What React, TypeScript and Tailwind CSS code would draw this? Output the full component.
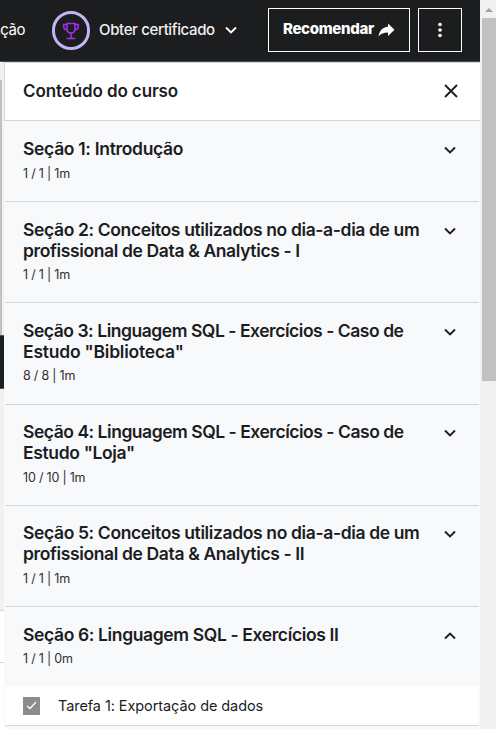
import React from "react";

type Line = { text: string; tracking: string };
type Section = { lines: Line[]; meta: string; metaClass: string; height: string; open?: boolean };

const sections: Section[] = [
  {
    lines: [{ text: "Seção 1: Introdução", tracking: "tracking-[-0.32px]" }],
    meta: "1 / 1 | 1m", metaClass: "mt-[6px]", height: "h-[81px] pt-[17px]",
  },
  {
    lines: [
      { text: "Seção 2: Conceitos utilizados no dia-a-dia de um", tracking: "tracking-[-0.37px]" },
      { text: "profissional de Data & Analytics - I", tracking: "tracking-[-0.37px]" },
    ],
    meta: "1 / 1 | 1m", metaClass: "mt-[4px]", height: "h-[101px] pt-[17px]",
  },
  {
    lines: [
      { text: "Seção 3: Linguagem SQL - Exercícios - Caso de", tracking: "tracking-[-0.46px]" },
      { text: 'Estudo "Biblioteca"', tracking: "tracking-[-0.22px]" },
    ],
    meta: "8 / 8 | 1m", metaClass: "mt-[4px]", height: "h-[102px] pt-[17px]",
  },
  {
    lines: [
      { text: "Seção 4: Linguagem SQL - Exercícios - Caso de", tracking: "tracking-[-0.47px]" },
      { text: 'Estudo "Loja"', tracking: "tracking-[-0.35px]" },
    ],
    meta: "10 / 10 | 1m", metaClass: "mt-[5px]", height: "h-[101px] pt-[16px]",
  },
  {
    lines: [
      { text: "Seção 5: Conceitos utilizados no dia-a-dia de um", tracking: "tracking-[-0.37px]" },
      { text: "profissional de Data & Analytics - II", tracking: "tracking-[-0.37px]" },
    ],
    meta: "1 / 1 | 1m", metaClass: "mt-[5px]", height: "h-[101px] pt-[16px]",
  },
  {
    lines: [{ text: "Seção 6: Linguagem SQL - Exercícios II", tracking: "tracking-[-0.37px]" }],
    meta: "1 / 1 | 0m", metaClass: "mt-[5px]", height: "h-[79px] pt-[17px]", open: true,
  },
];

function Chevron({ up = false }: { up?: boolean }) {
  return (
    <svg width="12" height="8" viewBox="0 0 12 8" fill="none" stroke="currentColor" strokeWidth="1.9" className={up ? "rotate-180" : ""}>
      <path d="M1 1.5 6 6.400 11 1.500" />
    </svg>
  );
}

function TopBar() {
  return (
    <header className="flex h-[62px] w-[480px] shrink-0 items-start overflow-hidden border-b border-[#4b4b52] bg-[#1c1d1f] text-white">
      <span className="mt-[20px] flex w-[25px] shrink-0 justify-end text-[15px] leading-[20px] tracking-[-0.5px]">ação</span>
      <div className="ml-[27px] mt-[11px] flex h-[39px] w-[38px] shrink-0 items-center justify-center rounded-full border-[3px] border-[#c0b4f5]">
        <svg width="18" height="18" viewBox="0 0 18 18" fill="none" stroke="#a32ff0" strokeWidth="1.500" className="shrink-0">
          <path d="M5 1.500h8v5.200c0 2.400-1.600 4.300-4 4.300S5 9.100 5 6.700ZM5 2.500H1.700v2C1.700 6.500 3 7.800 5.300 8M13 2.500h3.300v2c0 2-1.300 3.300-3.600 3.500M9 11v5M4.700 16.500h8.600" />
        </svg>
      </div>
      <span className="ml-[9px] mt-[20px] w-[117px] shrink-0 whitespace-nowrap text-[15px] font-medium leading-[20px] tracking-[-0.36px] text-[#f0f0f0]">Obter certificado</span>
      <span className="ml-[9px] mt-[26px] shrink-0"><Chevron /></span>
      <button className="ml-[31px] mt-2 flex h-[44px] w-[142px] shrink-0 items-center border border-white pb-[2px] pl-[13px] text-[15px] font-extrabold tracking-[-0.3px]">
        <span className="w-[93px] whitespace-nowrap">Recomendar</span>
        <svg width="17" height="14" viewBox="0 0 17 14" fill="white" className="ml-[3px] mt-[2px]">
          <path d="M10 .5v3.300C4.500 4.300 1.500 7.500.5 13.500 3 10.500 5.500 9.500 10 9.500V13l6.500-6.200Z" />
        </svg>
      </button>
      <button className="ml-[8px] mt-2 flex h-[44px] w-[44px] shrink-0 items-center justify-center border border-white">
        <svg width="4" height="16" viewBox="0 0 4 16" fill="white">
          <circle cx="2" cy="2.500" r="1.800" /><circle cx="2" cy="8" r="1.800" /><circle cx="2" cy="13.500" r="1.800" />
        </svg>
      </button>
    </header>
  );
}

function PageEdge() {
  return (
    <div className="flex w-1 shrink-0 flex-col bg-[#f1f1f1]">
      <div className="mt-[18px] h-[255px] w-[2px] bg-[#c1c1c1]" />
      <div className="h-[54px] border-y border-[#555] bg-[#1c1d1f]" />
      <div className="h-[221px]" />
      <div className="h-[53px] border-y border-[#d1d7dc] bg-white" />
      <div className="flex-1 bg-white" />
    </div>
  );
}

export default function App() {
  return (
    <div className="flex h-[729px] w-[496px] overflow-hidden bg-[#f1f1f1] font-[Inter,sans-serif] text-[#1c1d1f]">
      <div className="flex w-[480px] shrink-0 flex-col">
        <TopBar />
        <div className="flex min-h-0 flex-1">
          <PageEdge />
          <main className="flex w-[476px] flex-col bg-[#f8f9fb]">
            <div className="flex h-[59px] shrink-0 items-center justify-between border-y border-l border-[#d1d7dc] bg-white pl-[18px] pr-[22px]">
              <h1 className="text-[17px] font-semibold tracking-[-0.1px]">Conteúdo do curso</h1>
              <svg width="14" height="14" viewBox="0 0 14 14" stroke="currentColor" strokeWidth="1.800" className="-translate-y-px"><path d="m1 1 12 12M13 1 1 13" /></svg>
            </div>
            {sections.map((s) => (
              <section key={s.lines[0].text} className={`ml-px mr-px flex shrink-0 justify-between pl-[18px] pr-[23px] ${s.height} ${s.open ? "" : "border-b border-[#d1d7dc]"}`}>
                <div>
                  <h2 className="text-[17.500px] font-semibold leading-[21.300px]">
                    {s.lines.map((line) => <span key={line.text} className={`block whitespace-nowrap ${line.tracking}`}>{line.text}</span>)}
                  </h2>
                  <p className={`text-[12.500px] leading-[17px] tracking-[-0.2px] text-[#2d2f31] ${s.metaClass}`}>{s.meta}</p>
                </div>
                <span className="mt-[8px]"><Chevron up={s.open} /></span>
              </section>
            ))}
            <div className="ml-px mr-px flex h-[40px] shrink-0 items-center border-b border-[#d1d7dc] bg-white pl-[18px]">
              <span className="flex h-[18px] w-[17px] items-center justify-center bg-[#8b8c8d]">
                <svg width="11" height="9" viewBox="0 0 11 9" fill="none" stroke="white" strokeWidth="1.300"><path d="m1 5 3 2.500L10 1" /></svg>
              </span>
              <span className="ml-[18px] whitespace-nowrap text-[14.500px] leading-[20px] tracking-[-0.08px]">Tarefa 1: Exportação de dados</span>
            </div>
          </main>
        </div>
      </div>
      <aside className="flex w-4 shrink-0 flex-col bg-[#f1f1f1] pl-[2px]">
        <div className="flex h-[18px] items-center justify-center pt-[2px]">
          <svg width="8" height="4" viewBox="0 0 8 4" fill="#a3a3a3"><path d="M0 4 4 0l4 4Z" /></svg>
        </div>
        <div className="h-[363px] bg-[#c1c1c1]" />
      </aside>
    </div>
  );
}
